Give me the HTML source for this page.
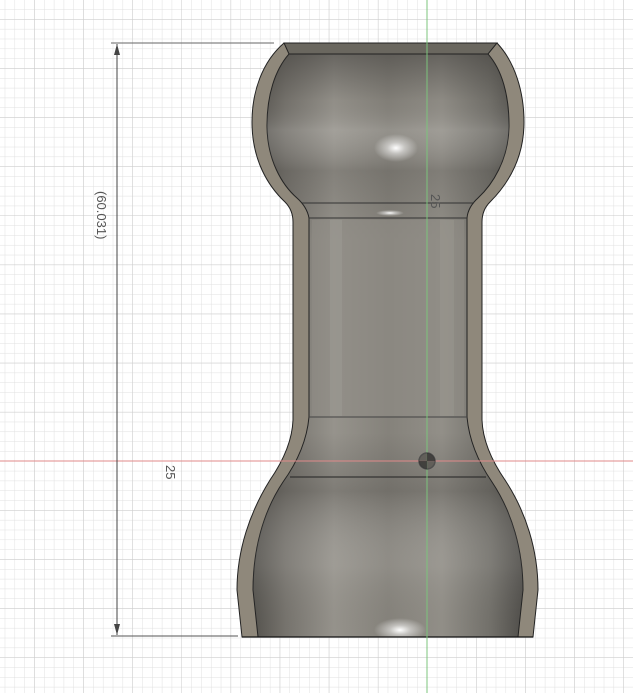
<!DOCTYPE html>
<html><head><meta charset="utf-8"><style>
html,body{margin:0;padding:0;background:#fff;width:633px;height:693px;overflow:hidden}
svg{display:block}
text{font-family:"Liberation Sans",sans-serif;fill:#555}
</style></head><body>
<svg width="633" height="693" viewBox="0 0 633 693" xmlns="http://www.w3.org/2000/svg">
<defs>
<pattern id="minor" x="427" y="461" width="9.82" height="9.82" patternUnits="userSpaceOnUse">
<path d="M0 0V9.82M0 0H9.82" stroke="#e0e0e0" stroke-width="1" fill="none"/>
</pattern>
<pattern id="major" x="427" y="461" width="49.1" height="49.1" patternUnits="userSpaceOnUse">
<path d="M0 0V49.1M0 0H49.1" stroke="#cbcbcb" stroke-width="1" fill="none"/>
</pattern>
<linearGradient id="body" x1="0" x2="1" y1="0" y2="0">
<stop offset="0" stop-color="#55534e"/>
<stop offset="0.12" stop-color="#76736d"/>
<stop offset="0.3" stop-color="#96938c"/>
<stop offset="0.5" stop-color="#85827b"/>
<stop offset="0.7" stop-color="#928f88"/>
<stop offset="0.88" stop-color="#72706a"/>
<stop offset="1" stop-color="#504e4a"/>
</linearGradient>
<linearGradient id="vert" x1="0" x2="0" y1="0" y2="1">
<stop offset="0" stop-color="#3a3835" stop-opacity="0.5"/>
<stop offset="0.08" stop-color="#3a3835" stop-opacity="0.05"/>
<stop offset="0.13" stop-color="#ffffff" stop-opacity="0.12"/>
<stop offset="0.2" stop-color="#3a3835" stop-opacity="0.2"/>
<stop offset="0.32" stop-color="#3a3835" stop-opacity="0"/>
<stop offset="0.65" stop-color="#3a3835" stop-opacity="0"/>
<stop offset="0.75" stop-color="#3a3835" stop-opacity="0.25"/>
<stop offset="0.88" stop-color="#ffffff" stop-opacity="0.08"/>
<stop offset="1" stop-color="#3a3835" stop-opacity="0"/>
</linearGradient>
<radialGradient id="hl">
<stop offset="0" stop-color="#fff" stop-opacity="1"/>
<stop offset="0.4" stop-color="#fff" stop-opacity="0.5"/>
<stop offset="1" stop-color="#fff" stop-opacity="0"/>
</radialGradient>
</defs>
<rect width="633" height="693" fill="url(#minor)"/>
<rect width="633" height="693" fill="url(#major)"/>

<path d="M284,43 L497,43 C515,62 524,92 524,122 C524,160 506,186 490,202 Q482,210 482,222 L482,420 Q483,448 505,480 C526,512 538,550 538,590 L533,637 L242,637 L237,590 C237,550 250,512 270,480 Q292,448 293,420 L293,222 Q293,210 285,202 C268,186 252,160 252,122 C252,92 262,62 284,43 Z" fill="#8f887b" stroke="#222" stroke-width="1"/>
<path d="M289,54 L488,54 C502,70 509,95 509,125 C509,160 492,185 478,198 Q468,207 467,218 L467,417 Q470,450 492,482 C512,512 523,550 523,590 L518,637 L258,637 L253,590 C253,550 263,512 283,482 Q306,450 309,417 L309,218 Q307,207 297,198 C282,185 267,160 267,125 C267,95 275,70 289,54 Z" fill="url(#body)" stroke="#222" stroke-width="1"/>
<path d="M289,54 L488,54 C502,70 509,95 509,125 C509,160 492,185 478,198 Q468,207 467,218 L467,417 Q470,450 492,482 C512,512 523,550 523,590 L518,637 L258,637 L253,590 C253,550 263,512 283,482 Q306,450 309,417 L309,218 Q307,207 297,198 C282,185 267,160 267,125 C267,95 275,70 289,54 Z" fill="url(#vert)"/>
<path d="M284,43 L497,43 L488,54 L289,54 Z" fill="#6a675f" stroke="#222" stroke-width="1"/>
<rect x="312" y="220" width="152" height="196" fill="#8f8c85" opacity="0.6"/>
<rect x="330" y="220" width="12" height="196" fill="#a09d96" opacity="0.45"/>
<rect x="440" y="220" width="14" height="196" fill="#a09d96" opacity="0.35"/>
<ellipse cx="396" cy="148" rx="22" ry="14" fill="url(#hl)"/>
<ellipse cx="400" cy="630" rx="26" ry="12" fill="url(#hl)"/>
<ellipse cx="390" cy="213" rx="14" ry="3" fill="url(#hl)"/>
<line x1="302" y1="203" x2="474" y2="203" stroke="#333" stroke-width="1"/>
<line x1="309" y1="218" x2="467" y2="218" stroke="#333" stroke-width="1"/>
<line x1="309" y1="417" x2="467" y2="417" stroke="#444" stroke-width="1"/>
<line x1="290" y1="477" x2="486" y2="477" stroke="#222" stroke-width="1"/>
<line x1="242" y1="637" x2="533" y2="637" stroke="#111" stroke-width="1.2"/>

<line x1="0" y1="461" x2="633" y2="461" stroke="#e08a8a" stroke-width="1"/>
<line x1="427" y1="0" x2="427" y2="693" stroke="#7cc47c" stroke-width="1"/>
<circle cx="427" cy="461" r="8" fill="#5a5752" stroke="#444" stroke-width="1.5" opacity="0.8"/>
<path d="M427,453 A8,8 0 0 1 435,461 L427,461 Z M427,469 A8,8 0 0 1 419,461 L427,461 Z" fill="#222" opacity="0.5"/>

<line x1="111" y1="43" x2="274" y2="43" stroke="#666" stroke-width="1"/>
<line x1="111" y1="636" x2="238" y2="636" stroke="#555" stroke-width="1"/>
<line x1="117" y1="44" x2="117" y2="635" stroke="#444" stroke-width="1"/>
<path d="M117,44 L114,55 L120,55 Z" fill="#444"/>
<path d="M117,635 L114,624 L120,624 Z" fill="#444"/>
<text x="0" y="0" font-size="13" transform="translate(97,191) rotate(90)">(60.031)</text>
<text x="0" y="0" font-size="13" transform="translate(166,465) rotate(90)">25</text>
<text x="0" y="0" font-size="13" fill="#444" transform="translate(431,194) rotate(90)">25</text>
</svg>
</body></html>
